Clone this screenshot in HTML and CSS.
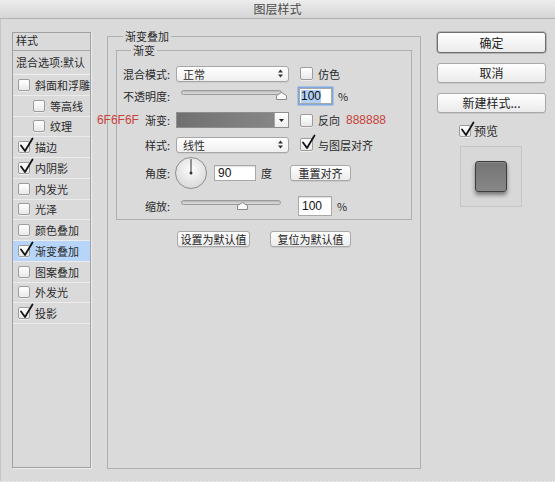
FILE: index.html
```html
<!DOCTYPE html>
<html lang="zh-CN">
<head>
<meta charset="utf-8">
<title>图层样式</title>
<link rel="stylesheet" href="styles.css">
</head>
<body>
<div class="window">
  <header class="titlebar">图层样式</header>
  <div class="content">
    <aside class="sidebar">
      <div class="side-head">样式</div>
      <div class="side-blend">混合选项:默认</div>
      <ul class="side-list">
        <li class="side-item"><span class="cb"></span>斜面和浮雕</li>
        <li class="side-item sub"><span class="cb"></span>等高线</li>
        <li class="side-item sub"><span class="cb"></span>纹理</li>
        <li class="side-item"><span class="cb"><svg class="tick" viewBox="0 0 15 16" width="15" height="16"><path d="M2 8.5 L6 14 L13.5 1.5"/></svg></span>描边</li>
        <li class="side-item"><span class="cb"><svg class="tick" viewBox="0 0 15 16" width="15" height="16"><path d="M2 8.5 L6 14 L13.5 1.5"/></svg></span>内阴影</li>
        <li class="side-item"><span class="cb"></span>内发光</li>
        <li class="side-item"><span class="cb"></span>光泽</li>
        <li class="side-item"><span class="cb"></span>颜色叠加</li>
        <li class="side-item active"><span class="cb"><svg class="tick" viewBox="0 0 15 16" width="15" height="16"><path d="M2 8.5 L6 14 L13.5 1.5"/></svg></span>渐变叠加</li>
        <li class="side-item"><span class="cb"></span>图案叠加</li>
        <li class="side-item"><span class="cb"></span>外发光</li>
        <li class="side-item"><span class="cb"><svg class="tick" viewBox="0 0 15 16" width="15" height="16"><path d="M2 8.5 L6 14 L13.5 1.5"/></svg></span>投影</li>
      </ul>
    </aside>

    <fieldset class="panel">
      <legend>渐变叠加</legend>
      <fieldset class="group">
        <legend>渐变</legend>

        <div class="row row-blend">
          <span class="lbl">混合模式:</span>
          <div class="popup"><span>正常</span><svg width="5" height="9" viewBox="0 0 5 9"><path d="M0 3.5 2.5 0.5 5 3.5z M0 5.5 2.5 8.5 5 5.5z" fill="#333"/></svg></div>
          <label class="check-item"><span class="cb cb-md"></span>仿色</label>
        </div>

        <div class="row row-opacity">
          <span class="lbl">不透明度:</span>
          <div class="slider"><div class="track"><svg class="thumb" style="left:100%" width="11" height="8" viewBox="0 0 11 8"><path d="M0.5 7.5 V3.5 L5.5 0.5 L10.5 3.5 V7.5 Z" fill="#f8f8f8" stroke="#8a8a8a"/></svg></div></div>
          <div class="field field-opacity"><span class="sel">100</span></div>
          <span class="unit">%</span>
        </div>

        <div class="row row-gradient">
          <span class="lbl"><span class="hex">6F6F6F</span>渐变:</span>
          <div class="swatch"><div class="swatch-fill"></div><div class="swatch-arrow"><svg width="5" height="3" viewBox="0 0 5 3"><path d="M0 0 H5 L2.5 3 Z" fill="#222"/></svg></div></div>
          <label class="check-item"><span class="cb cb-md"></span>反向</label>
          <span class="hex hex-right">888888</span>
        </div>

        <div class="row row-style">
          <span class="lbl">样式:</span>
          <div class="popup"><span>线性</span><svg width="5" height="9" viewBox="0 0 5 9"><path d="M0 3.5 2.5 0.5 5 3.5z M0 5.5 2.5 8.5 5 5.5z" fill="#333"/></svg></div>
          <label class="check-item"><span class="cb cb-md"><svg class="tick" viewBox="0 0 15 16" width="15" height="16"><path d="M2 8.5 L6 14 L13.5 1.5"/></svg></span>与图层对齐</label>
        </div>

        <div class="row row-angle">
          <span class="lbl">角度:</span>
          <svg class="dial" width="32" height="32" viewBox="0 0 32 32"><defs><radialGradient id="dg" cx="50%" cy="38%" r="62%"><stop offset="0" stop-color="#fdfdfd"/><stop offset="1" stop-color="#d8d8d8"/></radialGradient></defs><circle cx="16" cy="16" r="15.5" fill="url(#dg)" stroke="#8e8e8e"/><line x1="16" y1="16" x2="16" y2="2" stroke="#333" stroke-width="1"/><circle cx="16" cy="16" r="1.5" fill="#333"/></svg>
          <div class="field field-angle">90</div>
          <span class="unit">度</span>
          <button class="btn btn-small btn-reset">重置对齐</button>
        </div>

        <div class="row row-scale">
          <span class="lbl">缩放:</span>
          <div class="slider"><div class="track track-scale"><svg class="thumb" style="left:62%" width="11" height="8" viewBox="0 0 11 8"><path d="M0.5 7.5 V3.5 L5.5 0.5 L10.5 3.5 V7.5 Z" fill="#f8f8f8" stroke="#8a8a8a"/></svg></div></div>
          <div class="field field-scale">100</div>
          <span class="unit">%</span>
        </div>
      </fieldset>

      <div class="defaults">
        <button class="btn btn-small btn-def1">设置为默认值</button>
        <button class="btn btn-small btn-def2">复位为默认值</button>
      </div>
    </fieldset>

    <div class="actions">
      <button class="btn btn-ok">确定</button>
      <button class="btn">取消</button>
      <button class="btn">新建样式...</button>
      <label class="preview-toggle"><span class="cb"><svg class="tick" viewBox="0 0 15 16" width="15" height="16"><path d="M2 8.5 L6 14 L13.5 1.5"/></svg></span>预览</label>
      <div class="preview"><div class="preview-swatch"></div></div>
    </div>
  </div>
</div>
</body>
</html>
```

FILE: styles.css
```css
* { box-sizing: border-box; }
html, body { margin: 0; padding: 0; }
body {
  width: 555px;
  height: 482px;
  overflow: hidden;
  background: #dadada;
  font-family: "Noto Sans CJK SC", "Liberation Sans", sans-serif;
  font-size: 11px;
  line-height: 14px;
  color: #2a2a2a;
}

.window {
  width: 555px;
  height: 482px;
  background: #dadada;
  box-shadow: inset 1px 0 0 #c6c6c6;
  border-bottom: 1px dotted #efefef;
}

.titlebar {
  height: 19px;
  line-height: 18px;
  text-align: center;
  font-size: 12px;
  color: #4a4a4a;
  background: linear-gradient(#ededed, #d5d5d5);
  border-bottom: 1px solid #b2b2b2;
}

.content {
  display: flex;
  align-items: flex-start;
  padding: 10px 0 0 12px;
}

/* ---------- sidebar ---------- */
.sidebar {
  flex: none;
  width: 79px;
  height: 436px;
  margin-top: 3px;
  border: 1px solid #a0a0a0;
  box-shadow: 1px 1px 0 #ececec;
}
.side-head {
  height: 18px;
  padding-left: 3px;
  border-bottom: 1px solid #a9a9a9;
}
.side-blend {
  height: 24px;
  line-height: 23px;
  padding-left: 3px;
  border-bottom: 1px solid #eeeeee;
  white-space: nowrap;
}
.side-list { list-style: none; margin: 0; padding: 0; }
.side-item {
  display: flex;
  align-items: center;
  gap: 5px;
  height: 20.75px;
  padding-left: 5px;
  border-bottom: 1px solid #ececec;
  white-space: nowrap;
}
.side-item.sub { padding-left: 20px; }
.side-item.active { background: #b6d5f8; }

/* ---------- checkbox ---------- */
.cb {
  position: relative;
  flex: none;
  width: 12px;
  height: 12px;
  border: 1px solid #9c9c9c;
  border-radius: 2px;
  background: linear-gradient(#ffffff, #e9e9e9);
  box-shadow: 0 1px 0 rgba(255,255,255,.5);
}
.cb-md { width: 13px; height: 13px; }
.tick {
  position: absolute;
  left: 0;
  top: -5px;
  fill: none;
  stroke: #151515;
  stroke-width: 1.8;
  stroke-linecap: round;
  stroke-linejoin: round;
}

/* ---------- main panel ---------- */
.panel {
  flex: none;
  width: 314px;
  height: 440px;
  margin: 0 0 0 16px;
  padding: 0;
  min-width: 0;
  border: 1px solid #b0b0b0;
}
.panel > legend {
  margin-left: 15px;
  padding: 0 2px;
  line-height: 14px;
}
.group {
  margin: 0 8px;
  padding: 0 0 3px 0;
  min-width: 0;
  border: 1px solid #b0b0b0;
}
.group > legend {
  margin-left: 14px;
  padding: 0 2px;
  line-height: 14px;
}

.row { display: flex; align-items: center; white-space: nowrap; }
.row-blend { height: 17px; margin-top: 8px; }
.row-opacity { height: 18px; margin-top: 5px; }
.row-gradient { height: 16px; margin-top: 7px; }
.row-style { height: 17px; margin-top: 8px; }
.row-angle { height: 32px; margin-top: 4px; }
.row-scale { height: 20px; margin-top: 7px; }

.lbl {
  flex: none;
  width: 53px;
  display: flex;
  justify-content: flex-end;
  align-items: center;
}

.hex {
  font-family: "Liberation Sans", sans-serif;
  font-size: 12px;
  color: #c8423c;
  margin-right: 6px;
}
.hex-right { margin: 0 0 0 6px; }

.popup {
  flex: none;
  margin-left: 6px;
  width: 113px;
  height: 16px;
  padding: 0 5px 0 6px;
  display: flex;
  align-items: center;
  justify-content: space-between;
  border: 1px solid #a6a6a6;
  border-radius: 3px;
  background: linear-gradient(#ffffff, #efefef);
  box-shadow: 0 1px 0 rgba(0,0,0,.06);
}

.check-item {
  display: flex;
  align-items: center;
  gap: 5px;
  margin-left: 11px;
}

/* slider */
.slider {
  flex: none;
  width: 113px;
  height: 18px;
  margin-left: 6px;
}
.track {
  position: relative;
  height: 5px;
  margin: 3px 7px 0 5px;
  border: 1px solid #9a9a9a;
  border-radius: 3px;
  background: linear-gradient(#b9b9b9, #dedede);
}
.track-scale { margin-right: 8px; }
.thumb {
  position: absolute;
  top: 1px;
  margin-left: -5.5px;
}

/* fields */
.field {
  flex: none;
  display: flex;
  align-items: center;
  border: 1px solid #a8a8a8;
  background: #ffffff;
  box-shadow: inset 0 1px 1px rgba(0,0,0,.12);
  font-family: "Liberation Sans", sans-serif;
  font-size: 12px;
  color: #111;
}
.field-opacity {
  margin-left: 10px;
  width: 33px;
  height: 16px;
  padding-left: 1px;
  box-shadow: 0 0 0 1.5px #7ea8e2;
}
.sel { background: #b3d1f6; line-height: 13px; }
.field-angle {
  margin-left: 7px;
  width: 42px;
  height: 16px;
  padding-left: 3px;
}
.field-scale {
  margin-left: 9px;
  width: 34px;
  height: 20px;
  padding-left: 3px;
}
.unit { margin-left: 5px; font-size: 11px; }
.row-opacity .unit { margin-left: 6px; }

.dial { flex: none; margin-left: 5px; }

/* swatch */
.swatch {
  flex: none;
  display: flex;
  margin-left: 6px;
  width: 113px;
  height: 16px;
  border: 1px solid #8e8e8e;
}
.swatch-fill {
  flex: 1;
  background: linear-gradient(to right, #707070, #868686);
}
.swatch-arrow {
  width: 14px;
  display: flex;
  align-items: center;
  justify-content: center;
  border-left: 1px solid #a8a8a8;
  background: linear-gradient(#ffffff, #ececec);
}

/* buttons */
.btn {
  display: flex;
  align-items: center;
  justify-content: center;
  height: 20px;
  padding: 0;
  margin: 10px 0 0 0;
  border: 1px solid #a8a8a8;
  border-radius: 3px;
  background: linear-gradient(#fefefe, #ebebeb);
  box-shadow: 0 1px 0 rgba(0,0,0,.07);
  font-family: "Noto Sans CJK SC", "Liberation Sans", sans-serif;
  font-size: 12px;
  line-height: 14px;
  color: #222;
}
.btn-small {
  height: 16px;
  margin: 0;
  font-size: 11px;
}
.btn-reset { margin-left: 18px; width: 61px; }

.defaults {
  display: flex;
  justify-content: center;
  gap: 20px;
  margin-top: 11px;
}
.btn-def1 { width: 73px; }
.btn-def2 { width: 81px; }

/* right column */
.actions {
  flex: none;
  width: 109px;
  margin: 3px 0 0 16px;
  display: flex;
  flex-direction: column;
}
.btn-ok {
  margin-top: 0;
  height: 21px;
  border-color: #6e6e6e;
  box-shadow: 0 0 0 0.5px #8a8a8a;
}
.preview-toggle {
  display: flex;
  align-items: center;
  gap: 3px;
  height: 12px;
  margin: 12px 0 0 22px;
  font-size: 12px;
}
.preview {
  width: 62px;
  height: 61px;
  margin: 9px 0 0 23px;
  display: flex;
  align-items: center;
  justify-content: center;
  border: 1px solid #c5c5c5;
  background: #d8d8d8;
}
.preview-swatch {
  width: 32px;
  height: 31px;
  border-radius: 3px;
  border: 1px solid #3c3c3c;
  background: linear-gradient(#747474, #878787);
  box-shadow: 0 3px 4px rgba(0,0,0,.45), inset 0 1px 0 rgba(255,255,255,.15);
}
```
